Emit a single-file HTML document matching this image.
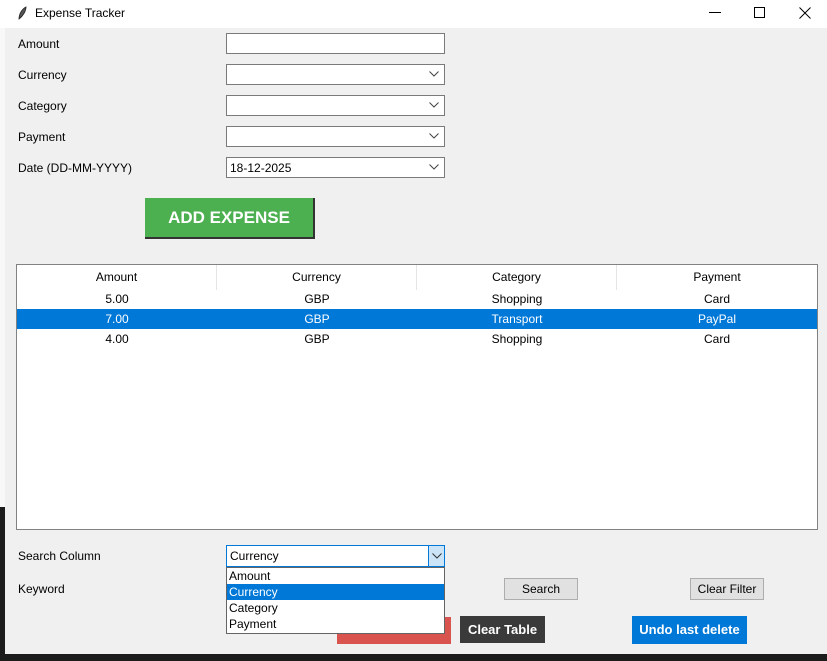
<!DOCTYPE html>
<html><head><meta charset="utf-8"><style>
*{margin:0;padding:0;box-sizing:border-box}
body{width:827px;height:661px;overflow:hidden;background:#f0f0f0;font-family:"Liberation Sans",sans-serif;font-size:12px;color:#000;position:relative}
.a{position:absolute}
.title{left:0;top:0;width:827px;height:28px;background:#fff}
.lbl{left:18px;font-size:12px}
.in{left:226px;width:219px;height:21px;background:#fff;border:1px solid #7a7a7a}
.in svg{position:absolute;right:5px;top:6px}
.in span{position:absolute;left:3px;top:3px}
.tbl{left:16px;top:264px;width:802px;height:266px;background:#fff;border:1px solid #828282}
.row{position:absolute;left:0;width:800px;height:20px;display:flex}
.row div{width:200px;text-align:center;line-height:20px}
.btn{background:#e1e1e1;border:1px solid #adadad;text-align:center;line-height:20px}
</style></head><body>
<div class="a title">
<svg class="a" style="left:16px;top:6px" width="12" height="14" viewBox="0 0 12 14"><path d="M3 13 C3 8 6 3 10 1 C10 5 7 10 3 13Z" fill="#555" stroke="#222" stroke-width=".8"/></svg>
<div class="a" style="left:35px;top:6px">Expense Tracker</div>
<div class="a" style="left:709px;top:12px;width:12px;height:1px;background:#000"></div>
<div class="a" style="left:754px;top:7px;width:11px;height:11px;border:1px solid #000"></div>
<svg class="a" style="left:799px;top:7px" width="12" height="12"><path d="M0.5 0.5L11.5 11.5M11.5 0.5L0.5 11.5" stroke="#000"/></svg>
</div>
<div class="a" style="left:0;top:28px;width:5px;height:479px;background:#f8f8f8"></div>
<div class="a" style="left:0;top:507px;width:5px;height:154px;background:#1c1c1c"></div>
<div class="a" style="left:0;top:654px;width:827px;height:7px;background:#1c1c1c"></div>

<div class="a lbl" style="top:37px">Amount</div>
<div class="a lbl" style="top:68px">Currency</div>
<div class="a lbl" style="top:99px">Category</div>
<div class="a lbl" style="top:130px">Payment</div>
<div class="a lbl" style="top:161px">Date (DD-MM-YYYY)</div>
<div class="a in" style="top:33px"></div>
<div class="a in" style="top:64px"><svg width="10" height="6"><path d="M.5 .5L5 5 9.5 .5" fill="none" stroke="#444"/></svg></div>
<div class="a in" style="top:95px"><svg width="10" height="6"><path d="M.5 .5L5 5 9.5 .5" fill="none" stroke="#444"/></svg></div>
<div class="a in" style="top:126px"><svg width="10" height="6"><path d="M.5 .5L5 5 9.5 .5" fill="none" stroke="#444"/></svg></div>
<div class="a in" style="top:157px"><span>18-12-2025</span><svg width="10" height="6"><path d="M.5 .5L5 5 9.5 .5" fill="none" stroke="#444"/></svg></div>
<div class="a" style="left:145px;top:198px;width:170px;height:41px;background:#4caf50;border-right:2px solid #333;border-bottom:2px solid #333;color:#fff;font-weight:bold;font-size:17px;text-align:center;line-height:40px">ADD EXPENSE</div>

<div class="a tbl">
<div class="row" style="top:0;height:25px"><div style="line-height:24px;border-right:1px solid #e5e5e5">Amount</div><div style="line-height:24px;border-right:1px solid #e5e5e5">Currency</div><div style="line-height:24px;border-right:1px solid #e5e5e5">Category</div><div style="line-height:24px">Payment</div></div>
<div class="row" style="top:24px"><div>5.00</div><div>GBP</div><div>Shopping</div><div>Card</div></div>
<div class="row" style="top:44px;background:#0078d7;color:#fff"><div>7.00</div><div>GBP</div><div>Transport</div><div>PayPal</div></div>
<div class="row" style="top:64px"><div>4.00</div><div>GBP</div><div>Shopping</div><div>Card</div></div>
</div>

<div class="a lbl" style="top:549px">Search Column</div>
<div class="a lbl" style="top:582px">Keyword</div>
<div class="a btn" style="left:504px;top:578px;width:74px;height:22px">Search</div>
<div class="a btn" style="left:690px;top:578px;width:74px;height:22px">Clear Filter</div>
<div class="a" style="left:337px;top:617px;width:114px;height:27px;background:#d9534f"></div>
<div class="a" style="left:460px;top:616px;width:85px;height:27px;background:#3a3a3a;color:#fff;font-weight:bold;font-size:13px;text-align:center;line-height:27px">Clear Table</div>
<div class="a" style="left:632px;top:616px;width:115px;height:28px;background:#0078d7;color:#fff;font-weight:bold;font-size:13px;text-align:center;line-height:28px">Undo last delete</div>

<div class="a" style="left:226px;top:545px;width:219px;height:22px;background:#fff;border:1px solid #0078d7"><span class="a" style="left:3px;top:3px">Currency</span>
<div class="a" style="right:0;top:0;width:16px;height:20px;background:#cce4f7;border-left:1px solid #0078d7"><svg class="a" style="left:3px;top:7px" width="10" height="6"><path d="M.5 .5L5 5 9.5 .5" fill="none" stroke="#333"/></svg></div></div>
<div class="a" style="left:226px;top:567px;width:219px;height:67px;background:#fff;border:1px solid #646464">
<div style="height:16px;padding-left:2px;line-height:16px">Amount</div>
<div style="height:16px;padding-left:2px;line-height:16px;background:#0078d7;color:#fff">Currency</div>
<div style="height:16px;padding-left:2px;line-height:16px">Category</div>
<div style="height:16px;padding-left:2px;line-height:16px">Payment</div>
</div>
</body></html>
